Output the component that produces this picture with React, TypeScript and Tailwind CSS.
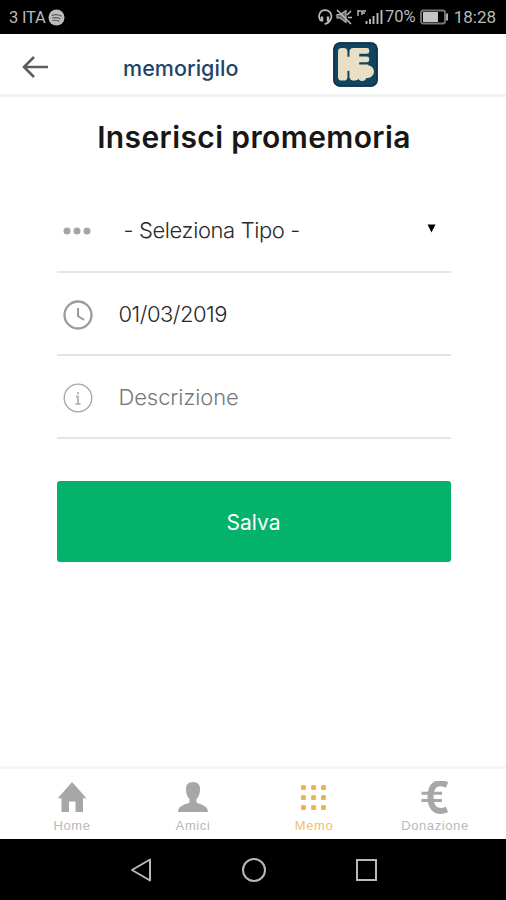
import React from 'react';

const StatusBar: React.FC = () => (
  <div className="flex h-[34px] items-center justify-between bg-black pl-[9px] pr-[10px] font-[Roboto,sans-serif] text-[#b9b9b9]">
    <div className="flex items-center gap-[2px]">
      <span className="text-[16.5px] leading-none tracking-[-0.2px] pt-[2px]">3 ITA</span>
      <svg width="17" height="17" viewBox="0 0 17 17" fill="none" strokeLinecap="round">
        <circle cx="8.5" cy="8.5" r="8" fill="#bdbdbd" />
        <path d="M4 6.200c3-1 6.400-.7 9.200.8M4.500 9c2.600-.8 5.300-.5 7.600.7M5 11.500c2.100-.5 4.200-.3 6 .7" stroke="#5a5a5a" strokeWidth="1.200" />
      </svg>
    </div>
    <div className="flex items-center">
      <svg width="68" height="18" viewBox="0 0 68 18" fill="none" stroke="#b9b9b9">
        <path d="M4 13C0 8 3 2.200 8 2.200s8.500 5.300 5 10.300c-1.200 2-3 3.200-5.500 3.500" strokeWidth="1.700" />
        <path d="M5 8.500v5M11 8.500v5" strokeWidth="2.500" />
        <path d="M20 6.500h3l6-4v12l-6-4.500h-3z" fill="#666" strokeWidth="1.100" />
        <path d="M20 2l14 14M30 7l4-4M31 9.500h4" strokeWidth="1.600" />
        <path d="M41 2v6M41 3h3M45 7V3h4M45 5h3" strokeWidth="1.400" />
        <path d="M49.500 16v-3M53 16v-5M56.500 16V8M60.500 16V5M64.500 16V2" strokeWidth="1.900" />
      </svg>
      <span className="text-[16.500px] leading-none">70%</span>
      <svg className="ml-[4px]" width="29" height="16" viewBox="0 0 29 16">
        <rect x="1" y="1.500" width="24" height="13" rx="2" fill="none" stroke="#777" strokeWidth="1.800" />
        <rect x="3" y="3" width="15" height="10" fill="#c4c4c4" />
        <path d="M27 4.500v7" stroke="#aaa" strokeWidth="2" />
      </svg>
      <span className="ml-[5px] pt-[1px] text-[17px] leading-none">18:28</span>
    </div>
  </div>
);

const Logo: React.FC = () => (
  <svg width="45" height="45" viewBox="0 0 134 134">
    <rect x="1" y="1" width="132" height="132" rx="20" fill="#0f4561" />
    <rect x="3" y="3" width="128" height="128" rx="18" fill="none" stroke="#143150" strokeWidth="5" />
    <g fill="#eadfc5">
      <rect x="15" y="18" width="28" height="97" rx="11" />
      <rect x="35" y="44" width="22" height="42" />
      <rect x="49" y="18" width="29" height="96" rx="11" />
      <rect x="58" y="18" width="50" height="17" rx="7" />
      <rect x="58" y="43" width="50" height="17" rx="7" />
      <path d="M55 67h50v40H55z" />
      <circle cx="103" cy="88" r="19" />
      <circle cx="62" cy="103" r="12" />
      <circle cx="87" cy="103" r="13" />
    </g>
  </svg>
);

const Header: React.FC = () => (
  <header className="flex h-[63px] items-center border-b-[3px] border-[#f2f2f2] bg-white">
    <svg className="ml-[21px] mt-[6px]" width="28" height="24" viewBox="0 0 28 24" fill="none" stroke="#5d5c63" strokeWidth="2.600">
      <path d="M13 2L3 12l10 10M3 12h24" />
    </svg>
    <span className="ml-[74px] mt-[10px] w-[116px] whitespace-nowrap font-[Inter,sans-serif] text-[21.500px] font-medium leading-none tracking-[0.05px] text-[#1d4567]">
      memorigilo
    </span>
    <div className="ml-[94px] mt-[1px]">
      <Logo />
    </div>
  </header>
);

interface FieldProps {
  icon: React.ReactNode;
  children: React.ReactNode;
}

const Field: React.FC<FieldProps> = ({ icon, children }) => (
  <div className="flex h-[83px] items-center border-b-2 border-[#e4e4e4]">
    <div className="flex w-[62px] shrink-0 pl-[5px]">{icon}</div>
    {children}
  </div>
);

const tabs = [
  {
    label: 'Home',
    icon: <path d="M15 1L.8 17.200H4.500V31h7.500V20.500h6.500V31H26V17.200h3.500z" />,
  },
  {
    label: 'Amici',
    icon: (
      <path d="M15 1c5 0 7.500 3 7 8-.3 5-2 7.500-3.500 9v3.500c3 2 11.500 2.500 11.500 9.500H0c0-7 8.500-7.500 11.500-9.500V18C10 16.500 8.300 14 8 9c-.5-5 2-8 7-8z" />
    ),
  },
  {
    label: 'Memo',
    active: true,
    icon: (
      <>
        {[5, 15, 25].map((y) =>
          [5, 15, 25].map((x) => <rect key={`${x}-${y}`} x={x - 3} y={y - 1} width="5" height="5" rx="1.5" />)
        )}
      </>
    ),
  },
  {
    label: 'Donazione',
    icon: (
      <g fill="none" stroke="currentColor">
        <path d="M27 4C17-.5 10.500 4 10.500 16S17 32.500 27 28.500" strokeWidth="6" />
        <path d="M1.500 12.300H22M1.500 19.500H22" strokeWidth="3" />
      </g>
    ),
  },
];

const App: React.FC = () => (
  <div className="flex h-[900px] w-[506px] flex-col overflow-hidden bg-white">
    <StatusBar />
    <Header />

    <main className="flex-1 px-[56px]">
      <h1 className="-mr-[6px] -ml-[4px] pt-[22px] text-center font-[Inter,sans-serif] text-[30px] font-semibold leading-[36px] tracking-[0.39px] whitespace-nowrap text-[#171717]">
        Inserisci promemoria
      </h1>

      <div className="mt-[35px] ml-[0.5px] w-[394px] font-[Inter,sans-serif] text-[22px] font-light leading-none">
        <Field
          icon={
            <svg width="30" height="8" viewBox="0 0 30 8" fill="#a5a5a5">
              <circle cx="5" cy="4" r="3.500" />
              <circle cx="15" cy="4" r="3.500" />
              <circle cx="25" cy="4" r="3.500" />
            </svg>
          }
        >
          <span className="mb-[2px] pl-[5px] tracking-[-0.38px] text-[#292929]">- Seleziona Tipo -</span>
          <svg className="mb-[4px] ml-auto mr-[15px]" width="9" height="9" viewBox="0 0 9 9">
            <path d="M.5.500h8L4.500 8.500z" />
          </svg>
        </Field>
        <Field
          icon={
            <svg className="mt-[2px]" width="32" height="32" viewBox="0 0 32 32" fill="none" stroke="#9b9b9b">
              <circle cx="16" cy="16" r="13.500" strokeWidth="2.300" />
              <path d="M16 9v8l6 4" strokeWidth="2" />
            </svg>
          }
        >
          <span className="tracking-[-0.5px] text-[#292929]">01/03/2019</span>
        </Field>
        <Field
          icon={
            <svg className="mt-[2px]" width="32" height="32" viewBox="0 0 32 32" fill="none" stroke="#a5a5a5">
              <circle cx="16" cy="16" r="13.800" strokeWidth="1.300" />
              <path d="M16 10v2.200M14 14.500h2V22M13.500 22h5" strokeWidth="1.500" />
            </svg>
          }
        >
          <span className="tracking-[-0.1px] text-[#777]">Descrizione</span>
        </Field>
      </div>

      <button className="mt-[42px] ml-[0.5px] block h-[81px] w-[394px] rounded-[3px] bg-[#03b26b] pt-[2px] font-[Inter,sans-serif] text-[21px] text-white">
        Salva
      </button>
    </main>

    <nav className="flex h-[73px] border-t-[3px] border-[#f6f6f6] px-[11px] font-[Liberation_Sans,sans-serif] text-[13px]">
      {tabs.map((tab) => (
        <div
          key={tab.label}
          className={`flex flex-1 flex-col items-center pt-[12px] ${tab.active ? 'text-[#eab54b]' : 'text-[#a5a7a9]'}`}
        >
          <svg width="30" height="33" viewBox="0 0 30 33" fill="currentColor">
            {tab.icon}
          </svg>
          <span className={`mt-[5px] ml-[1px] leading-none tracking-[0.6px] ${tab.active ? 'text-[#efc265]' : 'text-[#b7b9ba]'}`}>
            {tab.label}
          </span>
        </div>
      ))}
    </nav>

    <div className="flex h-[61px] justify-center bg-black">
      <svg width="300" height="61" viewBox="103 0 300 61" fill="none" stroke="#b9b9b9" strokeWidth="2">
        <path d="M132 31l18-10.500v21z" strokeLinejoin="round" />
        <circle cx="254" cy="31" r="11" />
        <rect x="357" y="21" width="19" height="20" />
      </svg>
    </div>
  </div>
);

export default App;
